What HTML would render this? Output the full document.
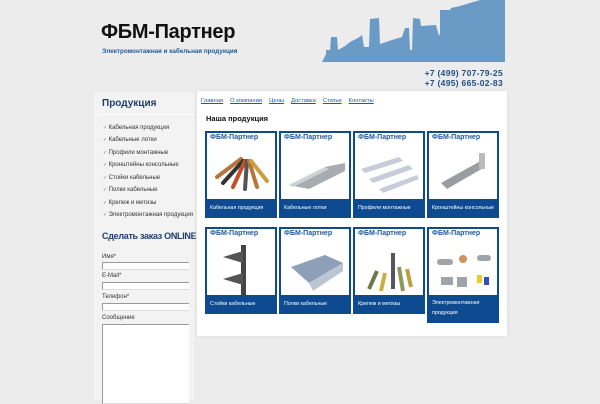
<!DOCTYPE html>
<html><head><meta charset="utf-8"><style>
*{margin:0;padding:0;box-sizing:border-box}
body{width:600px;height:400px;overflow:hidden;background:#ececec;font-family:"Liberation Sans","DejaVu Sans",sans-serif;position:relative}
.a{position:absolute}
.t{left:101px;top:21px;font-size:20px;font-weight:bold;color:#111;letter-spacing:-.3px}
.st{left:102px;top:48px;font-size:6.3px;color:#1e5aa0;font-weight:bold}
.ph{right:97px;font-size:8.5px;color:#1e4f85;font-weight:bold;letter-spacing:.3px}
.side{left:94px;top:92px;width:100px;height:308px;background:#f3f3f3}
.main{left:197px;top:91px;width:310px;height:245px;background:#fff;box-shadow:0 0 4px #ddd}
.sh{font-size:10px;font-weight:bold;color:#1d3f6b;white-space:nowrap}
.li{left:103px;font-size:6px;color:#333}
.li:before{content:"✓ ";color:#777;font-size:5px}
.lab{left:102px;font-size:6px;color:#333}
.in{left:102px;width:87px;height:8px;background:#fff;border:1px solid #999;border-right:none;border-bottom:1px solid #ddd}
.nav{left:201px;top:98px;font-size:5.8px;color:#1e5aa0;text-decoration:underline}
.nav span{margin-right:7px}
.card{width:72px;height:87px;border:2px solid #0d4a8f;background:#fff}
.card b{position:absolute;left:3px;top:1px;font-size:7px;color:#1e5aa0}
.card i{position:absolute;left:0;right:0;bottom:0;height:17px;background:#0d4a8f;color:#fff;font-style:normal;font-size:5.3px;padding:6px 3px 0}
.card svg{position:absolute;left:4px;top:14px}
</style></head><body>
<svg class="a" style="left:0;top:0" width="600" height="70">
<g fill="#6a9bc7">
<polygon points="322,62 326,54 330,52 331,37 337,37 338,50 345,46 350,42 358,38 362,35 364,47 369,47 370,19 379,18 380,44 392,40 402,37 405,28 409,28 410,50 412,52 413,18 420,19 421,26 436,25 439,36 442,28 451,8 460,6 470,3 480,0 505,0 505,62"/>
<rect x="326" y="50" width="179" height="12"/>
<rect x="440" y="10" width="65" height="52"/>
</g>
</svg>
<div class="a t">ФБМ-Партнер</div>
<div class="a st">Электромонтажная и кабельная продукция</div>
<div class="a ph" style="top:68px">+7 (499) 707-79-25</div>
<div class="a ph" style="top:78px">+7 (495) 665-02-83</div>
<div class="a side"></div>
<div class="a sh" style="left:102px;top:98px">Продукция</div>
<div class="a" style="left:97px;top:114px;width:97px;height:1px;background:#fff"></div>
<div class="a li" style="top:125px">Кабельная продукция</div>
<div class="a li" style="top:137px">Кабельные лотки</div>
<div class="a li" style="top:150px">Профили монтажные</div>
<div class="a li" style="top:162px">Кронштейны консольные</div>
<div class="a li" style="top:175px">Стойки кабельные</div>
<div class="a li" style="top:187px">Полки кабельные</div>
<div class="a li" style="top:200px">Крепеж и метизы</div>
<div class="a li" style="top:212px">Электромонтажная продукция</div>
<div class="a sh" style="left:102px;top:231px;font-size:9px;letter-spacing:-.3px">Сделать заказ ONLINE</div>
<div class="a lab" style="top:254px">Имя*</div><div class="a in" style="top:262px"></div>
<div class="a lab" style="top:273px">E-Mail*</div><div class="a in" style="top:282px"></div>
<div class="a lab" style="top:294px">Телефон*</div><div class="a in" style="top:303px"></div>
<div class="a lab" style="top:315px">Сообщение</div><div class="a in" style="top:324px;height:80px"></div>
<div class="a main"></div>
<div class="a nav"><span>Главная</span><span>О компании</span><span>Цены</span><span>Доставка</span><span>Статьи</span><span>Контакты</span></div>
<div class="a" style="left:206px;top:114px;font-size:7.5px;font-weight:bold;color:#111">Наша продукция</div>

<div class="a card" style="left:205px;top:131px"><b>ФБМ-Партнер</b><svg width="62" height="50"><g stroke-width="4" stroke-linecap="round"><line x1="6" y1="30" x2="30" y2="12" stroke="#b8743a"/><line x1="12" y1="36" x2="32" y2="14" stroke="#333"/><line x1="22" y1="40" x2="34" y2="14" stroke="#c0502a"/><line x1="34" y1="42" x2="36" y2="14" stroke="#555"/><line x1="46" y1="40" x2="38" y2="14" stroke="#b8743a"/><line x1="56" y1="34" x2="40" y2="14" stroke="#c8a040"/></g></svg><i>Кабельная продукция</i></div>
<div class="a card" style="left:279px;top:131px"><b>ФБМ-Партнер</b><svg width="62" height="50"><polygon points="4,38 40,20 60,16 60,24 24,42" fill="#a8acb0"/><polygon points="4,38 40,20 44,22 8,40" fill="#d0d3d6"/></svg><i>Кабельные лотки</i></div>
<div class="a card" style="left:353px;top:131px"><b>ФБМ-Партнер</b><svg width="62" height="50"><g fill="#c8ccd8"><polygon points="2,22 40,10 44,14 6,26"/><polygon points="10,32 50,18 54,22 14,36"/><polygon points="20,42 58,28 60,32 24,46"/></g></svg><i>Профили монтажные</i></div>
<div class="a card" style="left:427px;top:131px"><b>ФБМ-Партнер</b><svg width="62" height="50"><polygon points="8,36 44,16 50,12 52,20 14,42" fill="#9a9ea2"/><rect x="46" y="6" width="6" height="16" fill="#bbb"/></svg><i>Кронштейны консольные</i></div>

<div class="a card" style="left:205px;top:227px"><b>ФБМ-Партнер</b><svg width="62" height="55"><rect x="30" y="2" width="5" height="52" fill="#444"/><polygon points="12,14 32,8 32,20" fill="#555"/><polygon points="12,36 32,30 32,42" fill="#555"/></svg><i>Стойки кабельные</i></div>
<div class="a card" style="left:279px;top:227px"><b>ФБМ-Партнер</b><svg width="62" height="55"><polygon points="6,24 40,12 58,20 24,40" fill="#8ea0b8"/><polygon points="24,40 58,20 58,28 28,48" fill="#bcc6d2"/></svg><i>Полки кабельные</i></div>
<div class="a card" style="left:353px;top:227px"><b>ФБМ-Партнер</b><svg width="62" height="55"><g stroke-width="4"><line x1="10" y1="46" x2="18" y2="28" stroke="#6a7a4a"/><line x1="22" y1="48" x2="26" y2="30" stroke="#c8b040"/><line x1="34" y1="46" x2="34" y2="10" stroke="#556"/><line x1="44" y1="48" x2="40" y2="24" stroke="#8a9a5a"/><line x1="52" y1="44" x2="48" y2="26" stroke="#bca040"/></g></svg><i>Крепеж и метизы</i></div>
<div class="a card" style="left:427px;top:227px;height:96px"><b>ФБМ-Партнер</b><svg width="62" height="55"><g fill="#a0a4a8"><rect x="4" y="16" width="16" height="6" rx="3"/><rect x="44" y="12" width="14" height="6" rx="3"/><rect x="8" y="34" width="12" height="8"/><rect x="24" y="34" width="10" height="10"/></g><circle cx="30" cy="16" r="4" fill="#d09060"/><rect x="44" y="32" width="5" height="8" fill="#e8d020"/><rect x="51" y="34" width="5" height="8" fill="#3050c0"/></svg><i style="height:26px;line-height:10px;padding-top:3px">Электромонтажная продукция</i></div>
</body></html>
